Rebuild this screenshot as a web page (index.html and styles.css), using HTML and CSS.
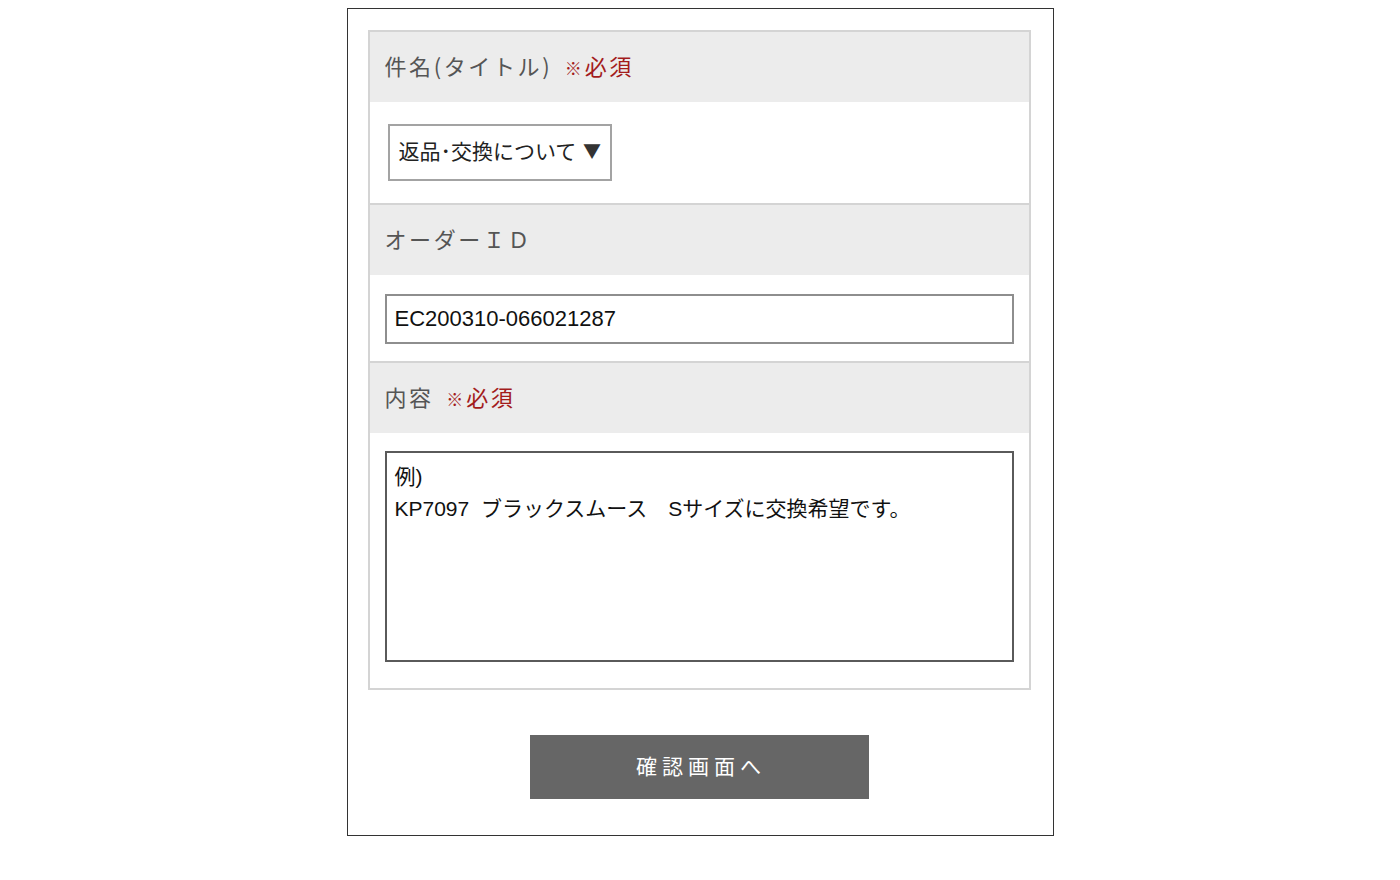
FILE: index.html
```html
<!DOCTYPE html>
<html lang="ja">
<head>
<meta charset="utf-8">
<title>お問い合わせ</title>
<link rel="stylesheet" href="styles.css">
</head>
<body>
<div class="frame">
  <form class="form-box">
    <div class="row">
      <div class="row-head">件名(タイトル) <span class="req"><span class="kome">※</span>必須</span></div>
      <div class="row-body row-body-select">
        <div class="select">返品･交換について <span class="caret">▼</span></div>
      </div>
    </div>
    <div class="row">
      <div class="row-head">オーダーＩＤ</div>
      <div class="row-body row-body-input">
        <input class="text-input" type="text" value="EC200310-066021287">
      </div>
    </div>
    <div class="row">
      <div class="row-head">内容 <span class="req"><span class="kome">※</span>必須</span></div>
      <div class="row-body row-body-area">
        <textarea class="text-area">例)
KP7097  ブラックスムース　Sサイズに交換希望です。</textarea>
      </div>
    </div>
  </form>
  <div class="actions">
    <button class="submit" type="button">確認画面へ</button>
  </div>
</div>
</body>
</html>
```

FILE: styles.css
```css
html, body {
  margin: 0;
  padding: 0;
  background: #fff;
}
body {
  font-family: "Liberation Sans", "Noto Sans CJK JP", sans-serif;
  color: #111;
}
.frame {
  box-sizing: border-box;
  width: 707px;
  margin: 8px auto 0;
  border: 1px solid #333;
  padding: 21px 22px 36px 20px;
}
.form-box {
  box-sizing: border-box;
  width: 663px;
  margin: 0;
  border: 2px solid #d4d4d4;
}
.row + .row {
  border-top: 2px solid #d4d4d4;
}
.row-head {
  box-sizing: border-box;
  height: 70px;
  display: flex;
  align-items: center;
  padding-left: 15px;
  padding-bottom: 5px;
  background: #ececec;
  font-family: "Noto Sans CJK JP", sans-serif;
  font-size: 22px;
  letter-spacing: 2.6px;
  color: #555;
  white-space: pre;
}
.req {
  color: #a31c1c;
  margin-left: 5px;
}
.kome {
  font-size: 17px;
  font-weight: 700;
  letter-spacing: 2px;
  margin-right: 1px;
}
.row-body {
  background: #fff;
  padding: 0 15px;
}
.row-body-select {
  padding-top: 22px;
  padding-bottom: 22px;
}
.row-body-input {
  padding-top: 19px;
  padding-bottom: 17px;
}
.row-body-area {
  padding-top: 18px;
  padding-bottom: 26px;
}
.select {
  box-sizing: border-box;
  display: inline-flex;
  align-items: center;
  margin-left: 3px;
  width: 224px;
  height: 57px;
  padding-left: 9px;
  padding-bottom: 5px;
  border: 2px solid #a3a3a3;
  font-family: "Noto Sans CJK JP", sans-serif;
  font-size: 21px;
  color: #222;
  white-space: pre;
}
.caret {
  font-size: 18px;
  color: #333;
  margin-left: 2px;
}
.text-input {
  box-sizing: border-box;
  display: block;
  width: 629px;
  height: 50px;
  margin: 0;
  padding: 0 0 0 8px;
  border: 2px solid #8e8e8e;
  border-radius: 0;
  outline: none;
  font-family: "Liberation Sans", "Noto Sans CJK JP", sans-serif;
  font-size: 22px;
  color: #111;
  background: #fff;
}
.text-area {
  box-sizing: border-box;
  display: block;
  width: 629px;
  height: 211px;
  margin: 0;
  padding: 8px 8px;
  border: 2px solid #5a5a5a;
  border-radius: 0;
  outline: none;
  resize: none;
  font-family: "Liberation Sans", "Noto Sans CJK JP", sans-serif;
  font-size: 21px;
  line-height: 32px;
  color: #111;
  background: #fff;
  overflow: hidden;
}
.actions {
  display: flex;
  justify-content: center;
  padding-top: 45px;
}
.submit {
  box-sizing: border-box;
  width: 339px;
  height: 64px;
  margin: 0;
  padding: 0 0 4px 4px;
  border: none;
  border-radius: 0;
  background: #666;
  color: #fff;
  font-family: "Noto Sans CJK JP", sans-serif;
  font-size: 21px;
  letter-spacing: 5px;
  cursor: pointer;
}
```
